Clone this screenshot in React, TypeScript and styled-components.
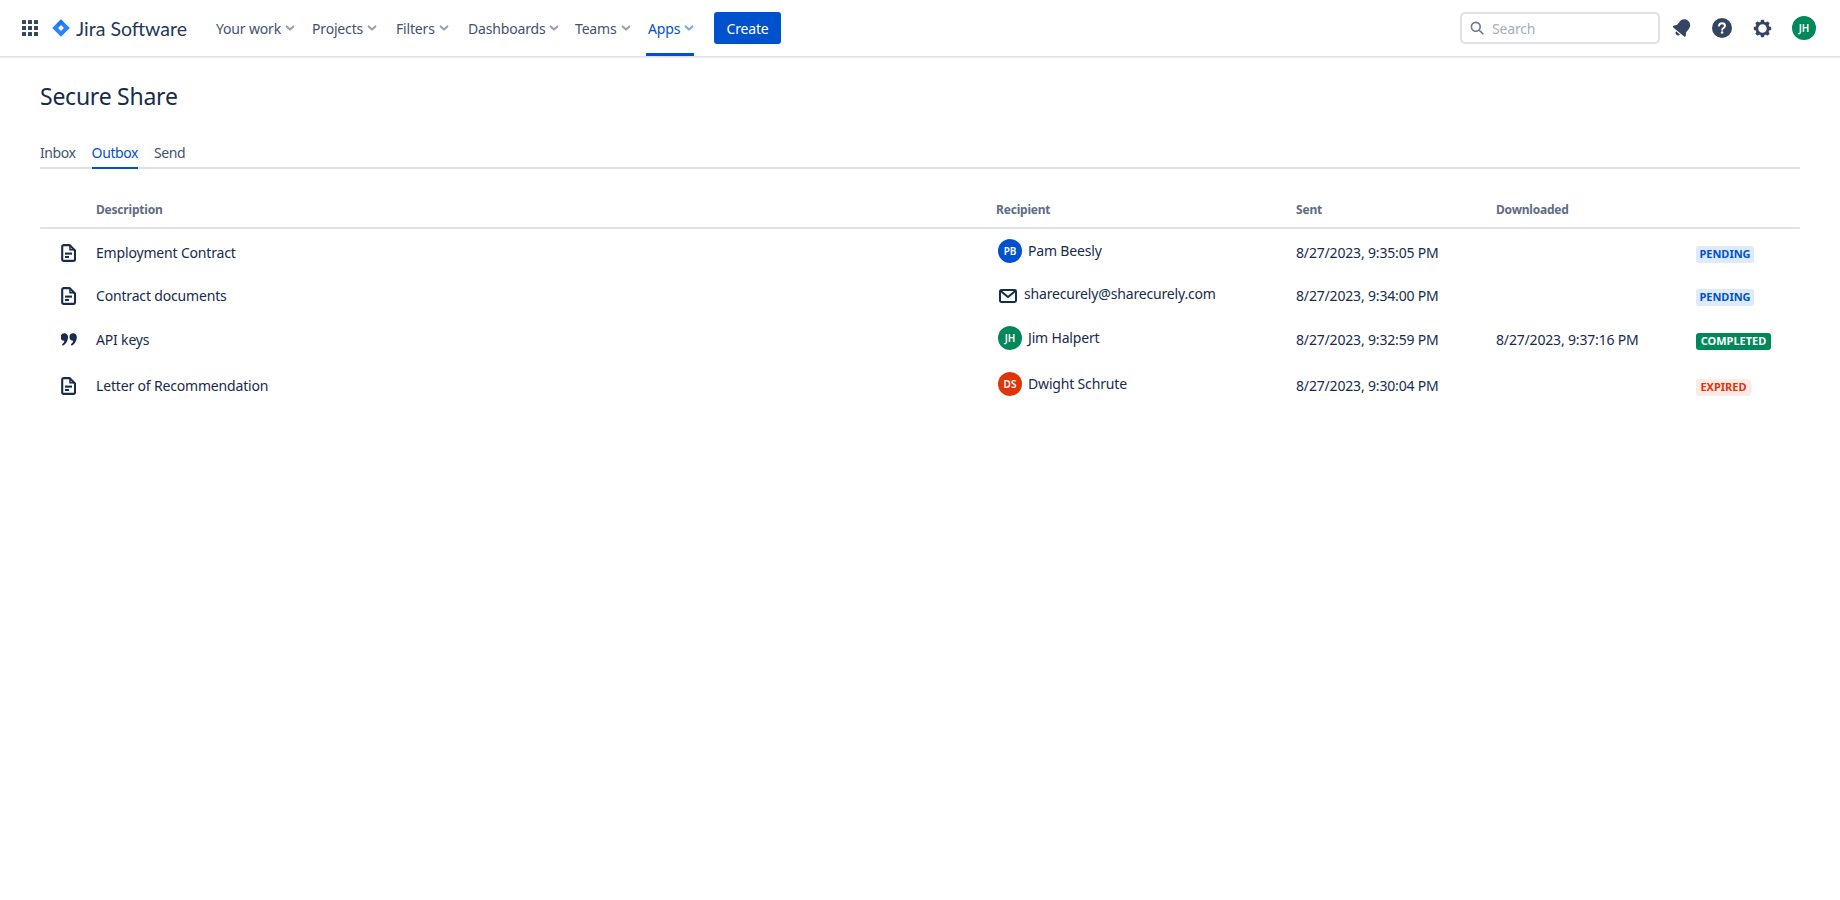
import React from "react"
import styled, { createGlobalStyle } from "styled-components"

const FONT = `"Noto Sans", "Open Sans", sans-serif`

const GlobalStyle = createGlobalStyle`
  html, body {
    margin: 0;
    padding: 0;
    background: #fff;
    color: #172b4d;
    font-family: ${FONT};
    font-size: 14px;
    letter-spacing: -0.17px;
  }
`

const navItems = [
  { text: "Your work", width: 96 },
  { text: "Projects", width: 84 },
  { text: "Filters", width: 72 },
  { text: "Dashboards", width: 107 },
  { text: "Teams", width: 73 },
  { text: "Apps", width: 48, active: true },
]

type Status = "pending" | "completed" | "expired"

const rows: {
  kind: "doc" | "quote"
  description: string
  recipient: { initials?: string; color?: string; name: string }
  sent: string
  downloaded?: string
  status: Status
  height: number
}[] = [
  {
    kind: "doc",
    description: "Employment Contract",
    recipient: { initials: "PB", color: "#0052cc", name: "Pam Beesly" },
    sent: "8/27/2023, 9:35:05 PM",
    status: "pending",
    height: 44,
  },
  {
    kind: "doc",
    description: "Contract documents",
    recipient: { name: "sharecurely@sharecurely.com" },
    sent: "8/27/2023, 9:34:00 PM",
    status: "pending",
    height: 42,
  },
  {
    kind: "quote",
    description: "API keys",
    recipient: { initials: "JH", color: "#00875a", name: "Jim Halpert" },
    sent: "8/27/2023, 9:32:59 PM",
    downloaded: "8/27/2023, 9:37:16 PM",
    status: "completed",
    height: 46,
  },
  {
    kind: "doc",
    description: "Letter of Recommendation",
    recipient: { initials: "DS", color: "#de350b", name: "Dwight Schrute" },
    sent: "8/27/2023, 9:30:04 PM",
    status: "expired",
    height: 46,
  },
]

const statusLook = {
  pending: { bg: "#deebff", fg: "#0052cc", width: 58 },
  completed: { bg: "#00875a", fg: "#ffffff", width: 75 },
  expired: { bg: "#ffebe6", fg: "#de350b", width: 55 },
}

const Chevron = () => (
  <svg width="12" height="12" viewBox="0 0 12 12">
    <path d="M2.6 4.4 6 7.6l3.4-3.2" fill="none" stroke="currentColor" strokeWidth="2" strokeLinecap="round" strokeLinejoin="round" />
  </svg>
)

const AppGrid = () => (
  <svg width="16" height="16" viewBox="0 0 16 16" fill="#344563">
    {[0, 6, 12].map((y) =>
      [0, 6, 12].map((x) => <rect key={`${x}-${y}`} x={x} y={y} width="4" height="4" rx="0.6" />),
    )}
  </svg>
)

const JiraMark = () => (
  <svg width="18" height="18" viewBox="0 0 18 18">
    <path d="M9 0.2 17.8 9 9 17.8 0.2 9Z" fill="#2684ff" />
    <path d="M9 0.2 4.6 4.6 9 9 6.1 9 9 6.1 11.9 3.1Z" fill="#0052cc" opacity="0.3" />
    <path d="M9 6.1 11.9 9 9 11.9 6.1 9Z" fill="#fff" />
  </svg>
)

const SearchGlyph = () => (
  <svg width="14" height="14" viewBox="0 0 14 14" fill="none" stroke="#6b778c" strokeWidth="1.6" strokeLinecap="round">
    <circle cx="5.8" cy="5.8" r="4.4" />
    <path d="m9.2 9.2 3.6 3.6" />
  </svg>
)

const Bell = () => (
  <svg width="24" height="24" viewBox="0 0 20 20" fill="#344563">
    <g transform="rotate(40 10 10)">
      <path d="M10 2.2c-3 0-4.9 2.2-4.9 5v3.3L3.4 13c-.4.6 0 1.3.7 1.3h11.8c.7 0 1.1-.7.7-1.3l-1.7-2.5V7.2c0-2.8-1.9-5-4.9-5Z" />
      <path d="M7.9 15.2h4.2a2.1 2.1 0 0 1-4.2 0Z" />
    </g>
  </svg>
)

const Help = () => (
  <svg width="20" height="20" viewBox="0 0 20 20">
    <circle cx="10" cy="10" r="10" fill="#344563" />
    <path d="M7 7.7C7.2 6.2 8.4 5.2 10.1 5.2c1.7 0 2.9 1 2.9 2.5 0 1.2-.7 1.8-1.5 2.3-.8.5-1.3.9-1.3 1.7" fill="none" stroke="#fff" strokeWidth="1.9" strokeLinecap="round" />
    <circle cx="10.1" cy="14.5" r="1.25" fill="#fff" />
  </svg>
)

const Gear = () => (
  <svg width="19" height="19" viewBox="0 0 20 20">
    <g fill="#344563">
      {[0, 45, 90, 135, 180, 225, 270, 315].map((r) => (
        <rect key={r} x="8.2" y="0.8" width="3.6" height="3.6" rx="1" transform={`rotate(${r} 10 10)`} />
      ))}
    </g>
    <circle cx="10" cy="10" r="6" fill="none" stroke="#344563" strokeWidth="3" />
  </svg>
)

const DocIcon = () => (
  <svg width="15" height="18" viewBox="0 0 15 18" fill="none" stroke="#172b4d" strokeWidth="2.1">
    <path d="M2.8 1.1h5.7L14 6.4v8.9a1.6 1.6 0 0 1-1.6 1.6H2.8a1.6 1.6 0 0 1-1.6-1.6V2.7a1.6 1.6 0 0 1 1.6-1.6Z" strokeLinejoin="round" />
    <path d="M9 1.4v4.4h4.6" strokeWidth="1.5" />
    <path d="M4 9.6h7" />
    <path d="M4 13h4" />
  </svg>
)

const QuoteIcon = () => (
  <svg width="16" height="14" viewBox="0 0 16 14" fill="#172b4d">
    <path d="M3.5 0.3a3.5 3.5 0 0 1 3.5 3.7c0 3.8-2.1 7.2-5 8.7L1 11.4c1.4-1 2.2-2.2 2.4-3.6a3.75 3.75 0 0 1 .1-7.5Z" />
    <path d="M12.3 0.3a3.5 3.5 0 0 1 3.5 3.7c0 3.8-2.1 7.2-5 8.7l-1-1.3c1.4-1 2.2-2.2 2.4-3.6a3.75 3.75 0 0 1 .1-7.5Z" />
  </svg>
)

const MailIcon = () => (
  <svg width="18" height="14" viewBox="0 0 18 14" fill="none" stroke="#172b4d" strokeWidth="2" strokeLinejoin="round">
    <rect x="1" y="1" width="16" height="12" rx="1.4" />
    <path d="M1.4 1.8 9 8l7.6-6.2" />
  </svg>
)

export default function App() {
  return (
    <>
      <GlobalStyle />
      <TopBar>
        <GridButton>
          <AppGrid />
        </GridButton>
        <Logo>
          <JiraMark />
          <Wordmark>Jira Software</Wordmark>
        </Logo>
        <NavList>
          {navItems.map(({ text, width, active }) => (
            <NavItem key={text} $width={width} $active={active}>
              {text}
              <Chevron />
            </NavItem>
          ))}
        </NavList>
        <CreateButton>Create</CreateButton>
        <RightSide>
          <SearchBox>
            <SearchGlyph />
            <SearchText>Search</SearchText>
          </SearchBox>
          <IconSlot>
            <Bell />
          </IconSlot>
          <IconSlot>
            <Help />
          </IconSlot>
          <IconSlot>
            <Gear />
          </IconSlot>
          <UserSlot>
            <Avatar $color="#00875a">JH</Avatar>
          </UserSlot>
        </RightSide>
      </TopBar>

      <Main>
        <Title>Secure Share</Title>
        <Tabs>
          <Tab>Inbox</Tab>
          <Tab $active>Outbox</Tab>
          <Tab>Send</Tab>
        </Tabs>
        <HeadRow>
          <span />
          <HeadCell>Description</HeadCell>
          <HeadCell>Recipient</HeadCell>
          <HeadCell>Sent</HeadCell>
          <HeadCell>Downloaded</HeadCell>
          <span />
        </HeadRow>
        {rows.map((row) => (
          <Row key={row.description} $height={row.height}>
            <KindCell>{row.kind === "doc" ? <DocIcon /> : <QuoteIcon />}</KindCell>
            <TextCell>{row.description}</TextCell>
            <RecipientCell>
              {row.recipient.initials ? (
                <Person>
                  <Avatar $color={row.recipient.color!}>{row.recipient.initials}</Avatar>
                  {row.recipient.name}
                </Person>
              ) : (
                <Email>
                  <MailIcon />
                  {row.recipient.name}
                </Email>
              )}
            </RecipientCell>
            <TextCell>{row.sent}</TextCell>
            <TextCell>{row.downloaded}</TextCell>
            <BadgeCell>
              <Badge $status={row.status}>{row.status}</Badge>
            </BadgeCell>
          </Row>
        ))}
      </Main>
    </>
  )
}

const TopBar = styled.header`
  height: 57px;
  box-sizing: border-box;
  display: flex;
  align-items: center;
  padding: 0 24px 0 22px;
  background: #fff;
  border-bottom: 1px solid #dfe1e6;
  box-shadow: 0 1px 1px rgba(9, 30, 66, 0.08);
`

const GridButton = styled.div`
  width: 16px;
  height: 16px;
  display: flex;
  margin-right: 14px;
`

const Logo = styled.div`
  display: flex;
  align-items: center;
  gap: 6px;
  width: 164px;
  flex: none;
  height: 100%;
`

const Wordmark = styled.span`
  font-family: "Lato", sans-serif;
  font-size: 19.5px;
  letter-spacing: 0;
  color: #253858;
  white-space: nowrap;
`

const NavList = styled.nav`
  display: flex;
  height: 100%;
`

const NavItem = styled.div<{ $width: number; $active?: boolean }>`
  position: relative;
  width: ${(p) => p.$width}px;
  flex: none;
  display: flex;
  align-items: center;
  gap: 3px;
  white-space: nowrap;
  color: ${(p) => (p.$active ? "#0052cc" : "#42526e")};

  svg {
    color: ${(p) => (p.$active ? "#7aa5e6" : "#97a0af")};
  }

  &::after {
    content: "";
    display: ${(p) => (p.$active ? "block" : "none")};
    position: absolute;
    left: -2px;
    width: 48px;
    bottom: 0;
    height: 3px;
    background: #0052cc;
  }
`

const CreateButton = styled.button`
  width: 67px;
  height: 32px;
  margin-left: 18px;
  border: 0;
  border-radius: 3px;
  background: #0052cc;
  color: #fff;
  font: inherit;
  letter-spacing: inherit;
  padding: 0;
`

const RightSide = styled.div`
  margin-left: auto;
  display: flex;
  align-items: center;
`

const SearchBox = styled.div`
  width: 200px;
  height: 32px;
  box-sizing: border-box;
  display: flex;
  align-items: center;
  gap: 8px;
  padding-left: 8px;
  border: 2px solid #dfe1e6;
  border-radius: 5px;
  margin-right: 2px;
`

const SearchText = styled.span`
  color: #a5adba;
`

const IconSlot = styled.div`
  width: 40px;
  height: 32px;
  display: flex;
  align-items: center;
  justify-content: center;
`

const UserSlot = styled.div`
  margin-left: 10px;
`

const Avatar = styled.div<{ $color: string }>`
  width: 24px;
  height: 24px;
  border-radius: 50%;
  flex: none;
  display: flex;
  align-items: center;
  justify-content: center;
  background: ${(p) => p.$color};
  color: #fff;
  font-size: 10px;
  font-weight: 600;
  letter-spacing: 0;
`

const Main = styled.main`
  padding: 0 40px;
`

const Title = styled.h1`
  margin: 0;
  padding-top: 23px;
  height: 32px;
  font-size: 23px;
  letter-spacing: -0.25px;
  line-height: 32px;
  font-weight: 400;
  color: #172b4d;
`

const Tabs = styled.div`
  display: flex;
  gap: 16px;
  height: 28px;
  margin-top: 27px;
  border-bottom: 2px solid #dfe1e6;
`

const Tab = styled.div<{ $active?: boolean }>`
  height: 30px;
  line-height: 28px;
  box-sizing: border-box;
  letter-spacing: -0.4px;
  color: ${(p) => (p.$active ? "#0052cc" : "#42526e")};
  border-bottom: 2px solid ${(p) => (p.$active ? "#0052cc" : "transparent")};
`

const cols = "56px 900px 300px 200px 200px 104px"

const HeadRow = styled.div`
  display: grid;
  grid-template-columns: ${cols};
  height: 60px;
  box-sizing: border-box;
  align-items: end;
  padding-bottom: 9px;
  border-bottom: 2px solid #dfe1e6;
`

const HeadCell = styled.div`
  font-size: 12px;
  font-weight: 700;
  letter-spacing: -0.2px;
  line-height: 16px;
  color: #5e6c84;
`

const Row = styled.div<{ $height: number }>`
  display: grid;
  grid-template-columns: ${cols};
  align-items: center;
  height: ${(p) => p.$height}px;
`

const KindCell = styled.div`
  display: flex;
  justify-content: flex-start;
  padding: 4px 0 0 21px;
`

const TextCell = styled.div`
  line-height: 20px;
  padding-top: 4px;
`

const RecipientCell = styled.div`
  line-height: 20px;
`

const Person = styled.div`
  display: flex;
  align-items: center;
  gap: 6px;
  padding-left: 2px;
`

const Email = styled.div`
  display: flex;
  align-items: center;
  gap: 7px;
  padding-left: 3px;

  svg {
    margin-top: 4px;
  }
`

const BadgeCell = styled.div`
  display: flex;
  padding-top: 7px;
`

const Badge = styled.span<{ $status: Status }>`
  width: ${(p) => statusLook[p.$status].width}px;
  height: 17px;
  line-height: 16px;
  text-align: center;
  border-radius: 3px;
  font-size: 11px;
  font-weight: 700;
  letter-spacing: 0;
  text-transform: uppercase;
  background: ${(p) => statusLook[p.$status].bg};
  color: ${(p) => statusLook[p.$status].fg};
`
